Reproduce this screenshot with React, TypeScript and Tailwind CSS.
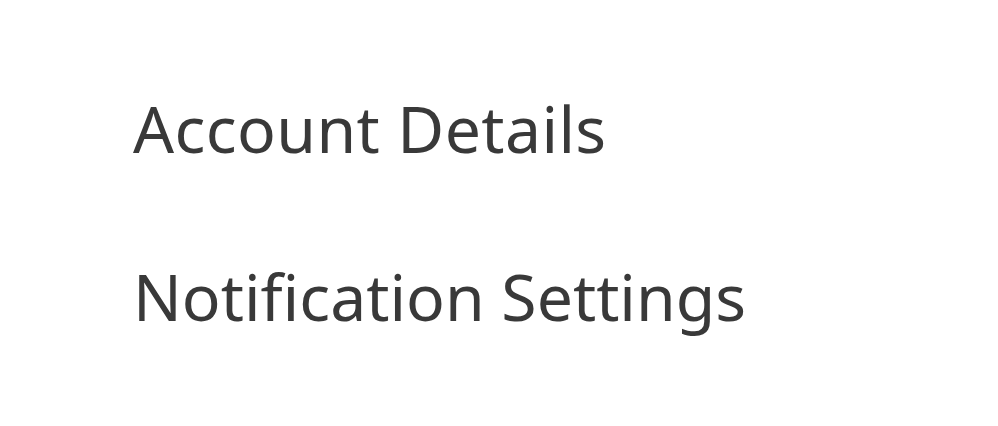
export default function App() {
  return (
    <div className="w-[998px] h-[426px] bg-white flex flex-col pl-[133px] pt-[92px] gap-[96px] text-[#393939]" style={{ fontFamily: '"Noto Sans", sans-serif' }}>
      <div className="text-[64.3px] leading-[72px] tracking-[0.4px]">Account Details</div>
      <div className="text-[64.3px] leading-[72px]">Notification Settings</div>
    </div>
  );
}
